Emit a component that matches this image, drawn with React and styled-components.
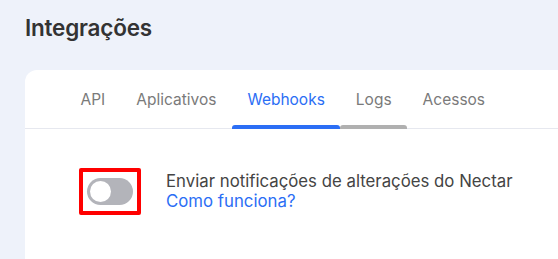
import React from "react";
import styled, { createGlobalStyle } from "styled-components";

const Global = createGlobalStyle`
  html, body { margin: 0; padding: 0; background: #eef2fa; }
  body { font-family: Inter, "Noto Sans", sans-serif; overflow: hidden; }
  * { box-sizing: border-box; }
`;

const Page = styled.div`
  width: 558px;
  height: 259px;
  padding: 13px 0 0 25px;
  display: flex;
  flex-direction: column;
`;

const Title = styled.h1`
  margin: 0;
  font-size: 22.5px;
  font-weight: 600;
  color: #333;
  line-height: 29px;
  letter-spacing: -0.2px;
`;

const Card = styled.div`
  margin-top: 28px;
  flex: 1;
  background: #fff;
  border-radius: 12px 0 0 0;
  width: 560px;
`;

const Tabs = styled.div`
  display: flex;
  padding-left: 40px;
  border-bottom: 1px solid #e6e8ef;
  height: 59px;
`;

const Tab = styled.div`
  position: relative;
  padding: 0 15.5px;
  display: flex;
  align-items: center;
  font-size: 15.5px;
  color: ${(p) => (p.$active ? "#2b6ef5" : "#7a7a7a")};
  &::after {
    content: "";
    display: ${(p) => (p.$bar ? "block" : "none")};
    position: absolute;
    left: 0;
    right: 0;
    bottom: -1px;
    height: 4px;
    border-radius: 3px 3px 0 0;
    background: ${(p) => p.$bar};
  }
`;

const Body = styled.div`
  display: flex;
  align-items: center;
  padding: 39px 0 0 54px;
  gap: 25px;
`;

const Highlight = styled.div`
  border: 4px solid #ff0000;
  border-radius: 2px;
  padding: 6px 4px;
  display: flex;
`;

const Switch = styled.div`
  width: 46px;
  height: 27px;
  border-radius: 14px;
  background: #b3b4ba;
  display: flex;
  align-items: center;
  padding-left: 3px;
`;

const Knob = styled.div`
  width: 21px;
  height: 21px;
  border-radius: 50%;
  background: #fff;
`;

const Texts = styled.div`
  display: flex;
  flex-direction: column;
  font-size: 16.8px;
  line-height: 20px;
  margin-top: -2px;
`;

const Label = styled.span`
  color: #444;
`;

const Link = styled.a`
  color: #2b6ef5;
  text-decoration: none;
`;

export default function App() {
  return (
    <>
      <Global />
      <Page>
        <Title>Integrações</Title>
        <Card>
          <Tabs>
            <Tab>API</Tab>
            <Tab>Aplicativos</Tab>
            <Tab $active $bar="#2b6ef5">Webhooks</Tab>
            <Tab $bar="#b0b0b0">Logs</Tab>
            <Tab>Acessos</Tab>
          </Tabs>
          <Body>
            <Highlight>
              <Switch>
                <Knob />
              </Switch>
            </Highlight>
            <Texts>
              <Label>Enviar notificações de alterações do Nectar</Label>
              <Link href="#">Como funciona?</Link>
            </Texts>
          </Body>
        </Card>
      </Page>
    </>
  );
}
